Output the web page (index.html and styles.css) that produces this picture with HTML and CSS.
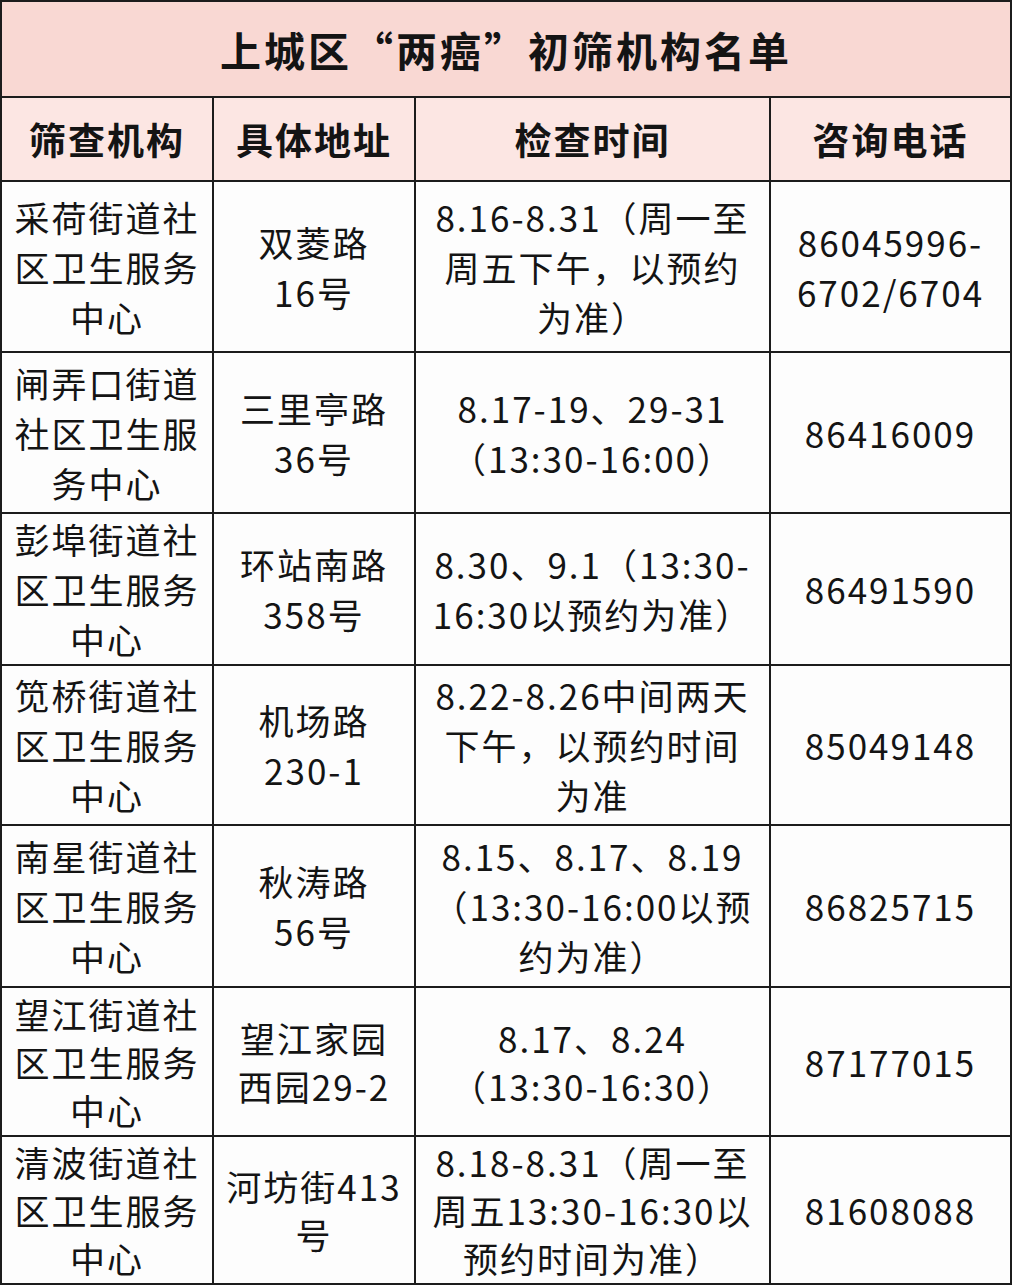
FILE: index.html
```html
<!DOCTYPE html>
<html lang="zh-CN">
<head>
<meta charset="utf-8">
<title>上城区“两癌”初筛机构名单</title>
<link rel="stylesheet" href="styles.css">
</head>
<body>
<table class="sheet">
  <colgroup>
    <col class="c1"><col class="c2"><col class="c3"><col class="c4">
  </colgroup>
  <thead>
    <tr class="title-row"><th colspan="4" class="title">上城区“两癌”初筛机构名单</th></tr>
    <tr class="head-row">
      <th>筛查机构</th><th>具体地址</th><th>检查时间</th><th>咨询电话</th>
    </tr>
  </thead>
  <tbody>
    <tr class="r1">
      <td>采荷街道社<br>区卫生服务<br>中心</td>
      <td>双菱路<br>16号</td>
      <td>8.16-8.31（周一至<br>周五下午，以预约<br>为准）</td>
      <td>86045996-<br>6702/6704</td>
    </tr>
    <tr class="r2">
      <td>闸弄口街道<br>社区卫生服<br>务中心</td>
      <td>三里亭路<br>36号</td>
      <td>8.17-19、29-31<br>（13:30-16:00）</td>
      <td>86416009</td>
    </tr>
    <tr class="r3">
      <td>彭埠街道社<br>区卫生服务<br>中心</td>
      <td>环站南路<br>358号</td>
      <td>8.30、9.1（13:30-<br>16:30以预约为准）</td>
      <td>86491590</td>
    </tr>
    <tr class="r4">
      <td>笕桥街道社<br>区卫生服务<br>中心</td>
      <td>机场路<br>230-1</td>
      <td>8.22-8.26中间两天<br>下午，以预约时间<br>为准</td>
      <td>85049148</td>
    </tr>
    <tr class="r5">
      <td>南星街道社<br>区卫生服务<br>中心</td>
      <td>秋涛路<br>56号</td>
      <td>8.15、8.17、8.19<br>（13:30-16:00以预<br>约为准）</td>
      <td>86825715</td>
    </tr>
    <tr class="r6">
      <td>望江街道社<br>区卫生服务<br>中心</td>
      <td>望江家园<br>西园29-2</td>
      <td>8.17、8.24<br>（13:30-16:30）</td>
      <td>87177015</td>
    </tr>
    <tr class="r7">
      <td>清波街道社<br>区卫生服务<br>中心</td>
      <td>河坊街413<br>号</td>
      <td>8.18-8.31（周一至<br>周五13:30-16:30以<br>预约时间为准）</td>
      <td>81608088</td>
    </tr>
  </tbody>
</table>
</body>
</html>
```
FILE: styles.css
```css
html, body {
  margin: 0;
  padding: 0;
  background: #ffffff;
}

.sheet {
  width: 1010px;
  table-layout: fixed;
  border-collapse: collapse;
  font-family: "Noto Sans CJK SC", "Noto Sans", sans-serif;
  color: #141414;
  background: #fdfdfd;
}

.c1 { width: 212px; }
.c2 { width: 202px; }
.c3 { width: 355px; }
.c4 { width: 241px; }

.sheet th,
.sheet td {
  border: 2px solid #1c1c1c;
  padding: 0;
  text-align: center;
  vertical-align: middle;
  white-space: nowrap;
  overflow: hidden;
}

.sheet td {
  font-size: 35px;
  line-height: 50px;
  font-weight: 400;
  letter-spacing: 2px;
}

.title-row { height: 96px; }
.title {
  background: #f9d8d3;
  font-size: 41px;
  font-weight: 700;
  letter-spacing: 3px;
  padding-left: 6px;
}

.head-row { height: 84px; }
.head-row th {
  background: #fce6e3;
  font-size: 37px;
  font-weight: 700;
  letter-spacing: 2px;
}

.r1 { height: 171px; }
.r2 { height: 161px; }
.r3 { height: 151px; }
.r4 { height: 160px; }
.r5 { height: 162px; }
.r6 { height: 149px; }
.r7 { height: 148px; }

.r6 td,
.r7 td {
  line-height: 48px;
}
```
